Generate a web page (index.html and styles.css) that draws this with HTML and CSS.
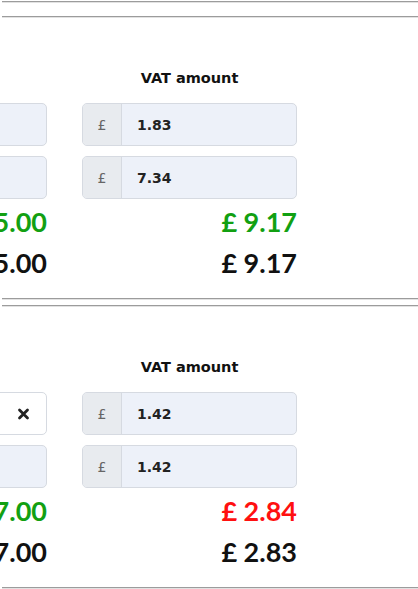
FILE: index.html
```html
<!DOCTYPE html>
<html lang="en">
<head>
  <meta charset="UTF-8" />
  <meta name="viewport" content="width=device-width, initial-scale=1.0"/>
  <title>VAT check</title>
  <link rel="stylesheet" href="styles.css">
</head>
<body>
  <hr class="rule top">
  <hr class="rule">
  <section class="vat-block">
    <div class="cols">
      <div class="col">
        <div class="label">Gross amount</div>
        <div class="field"><span class="addon">£</span><span class="value">11.00</span></div>
        <div class="field"><span class="addon">£</span><span class="value">44.00</span></div>
        <div class="total ok">£ 55.00</div>
        <div class="total">£ 55.00</div>
      </div>
      <div class="col">
        <div class="label">VAT amount</div>
        <div class="field"><span class="addon">£</span><span class="value">1.83</span></div>
        <div class="field"><span class="addon">£</span><span class="value">7.34</span></div>
        <div class="total ok">£ 9.17</div>
        <div class="total">£ 9.17</div>
      </div>
    </div>
  </section>
  <hr class="rule">
  <hr class="rule gap">
  <section class="vat-block">
    <div class="cols">
      <div class="col">
        <div class="label">Gross amount</div>
        <div class="field select">
          <span class="value">Select…</span>
          <span class="clear">
            <svg width="13" height="12" viewBox="0 0 13 12"><path d="M2.5 2L10.5 10M10.5 2L2.5 10" stroke="#222" stroke-width="2.8" stroke-linecap="round"/></svg>
          </span>
        </div>
        <div class="field"><span class="addon">£</span><span class="value">8.50</span></div>
        <div class="total ok">£ 17.00</div>
        <div class="total">£ 17.00</div>
      </div>
      <div class="col">
        <div class="label">VAT amount</div>
        <div class="field"><span class="addon">£</span><span class="value">1.42</span></div>
        <div class="field"><span class="addon">£</span><span class="value">1.42</span></div>
        <div class="total bad">£ 2.84</div>
        <div class="total">£ 2.83</div>
      </div>
    </div>
  </section>
  <hr class="rule">
</body>
</html>
```

FILE: styles.css
```css
body {
  margin: 0;
  background: #fff;
  font-family: "DejaVu Sans", Verdana, sans-serif;
  color: #111;
  overflow: hidden;
}
.rule {
  height: 0;
  margin: 0 0 0 2px;
  border: 0;
  border-top: 1px solid #9c9c9c;
  border-bottom: 1px solid #e2e2e2;
}
.rule.top {
  margin-top: 1px;
  margin-bottom: 13px;
}
.rule.gap {
  margin-top: 5px;
}
.vat-block {
  padding: 50px 0 15px;
}
.cols {
  display: flex;
  gap: 35px;
  margin-left: -168px;
}
.col {
  width: 215px;
  display: flex;
  flex-direction: column;
  gap: 10px;
}
.label {
  text-align: center;
  font-weight: 700;
  font-size: 14.5px;
  line-height: 18px;
  margin-top: 1px;
  margin-bottom: 6px;
}
.field {
  display: flex;
  height: 43px;
  box-sizing: border-box;
  border: 1px solid #d6dae1;
  border-radius: 5px;
  background: #edf1f9;
  overflow: hidden;
}
.field.select {
  background: #fff;
  justify-content: space-between;
}
.field.select .value {
  color: #999;
  font-weight: 400;
}
.addon {
  width: 38px;
  flex: none;
  display: flex;
  align-items: center;
  justify-content: center;
  background: #e8ebef;
  border-right: 1px solid #d6dae1;
  color: #666;
  font-size: 14px;
}
.value {
  display: flex;
  align-items: center;
  padding-left: 15px;
  font-weight: 700;
  font-size: 14px;
  color: #222;
}
.clear {
  display: flex;
  align-items: center;
  padding-right: 16px;
}
.total {
  font-family: Lato, "Liberation Sans", sans-serif;
  text-align: right;
  font-weight: 700;
  font-size: 27px;
  line-height: 41px;
}
.col .total.ok,
.col .total.bad {
  margin-top: -8px;
  margin-bottom: -10px;
}
.total.ok {
  color: #12a012;
}
.total.bad {
  color: #ff1010;
}
```
